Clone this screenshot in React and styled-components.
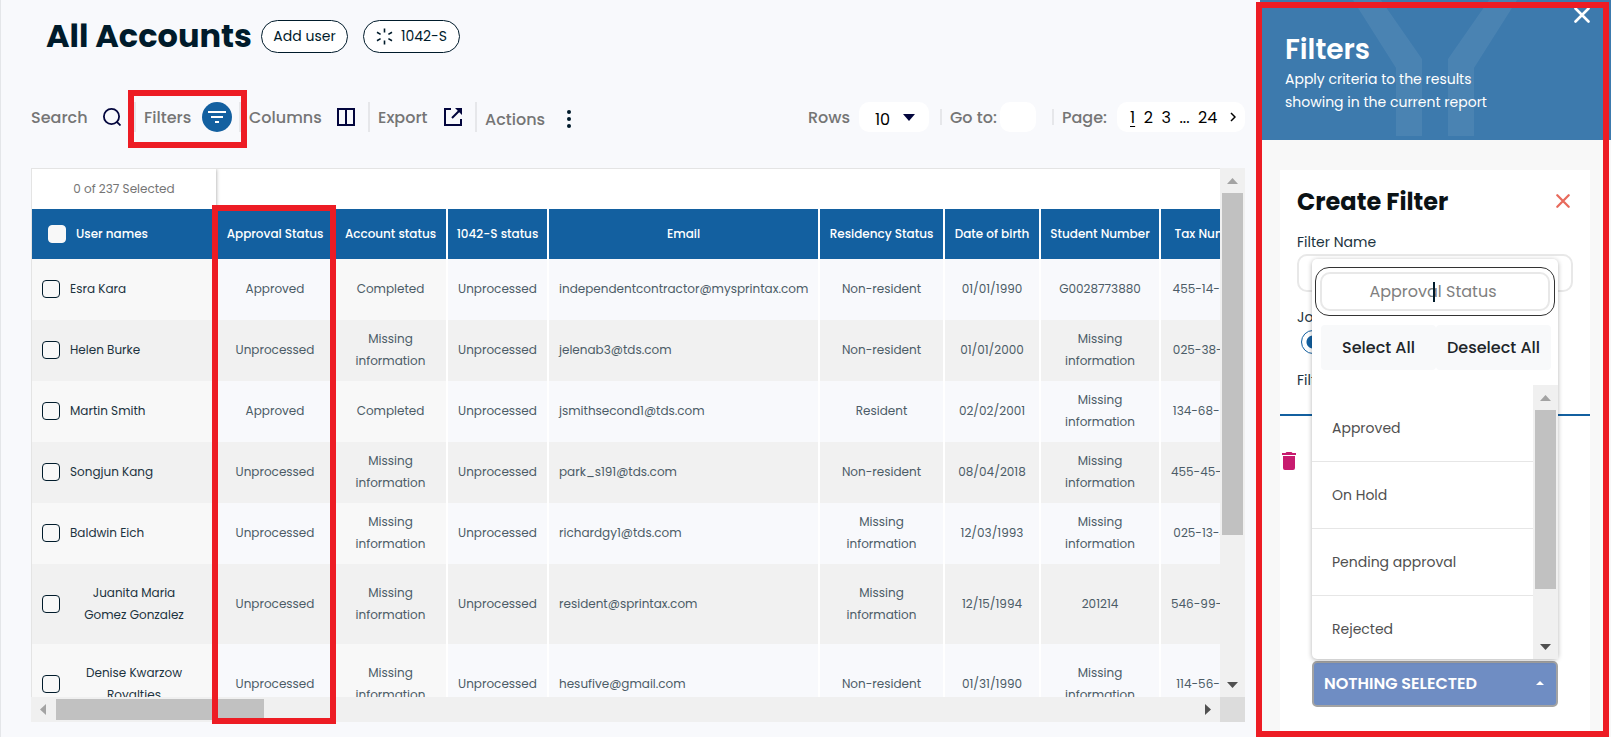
import React from 'react';
import styled, { createGlobalStyle, css } from 'styled-components';

const GlobalStyle = createGlobalStyle`
  *, *::before, *::after {
    box-sizing: border-box;
  }

  body {
    margin: 0;
    background: #f8f9fc;
    color: #001b2b;
    font-family: Poppins, Inter, "Open Sans", sans-serif;
    font-size: 16px;
  }

  button, input, select {
    font-family: inherit;
    color: inherit;
  }
`;

const Page = styled.div`
  display: flex;
  height: 100vh;
  overflow: hidden;
`;

const Main = styled.main`
  display: flex;
  flex: 1;
  flex-direction: column;
  min-width: 0;
  padding: 20px 15px 15px 30px;
  border-left: 1px solid #e4e6e9;
`;

/* red marker drawn over the part being explained */
const Marker = styled.div`
  position: absolute;
  z-index: 5;
  border: 6px solid #ed1c24;
  pointer-events: none;
`;

const TitleBar = styled.header`
  display: flex;
  align-items: center;
  height: 33px;
  padding-left: 15px;
`;

const Title = styled.h1`
  min-width: 215px;
  margin: 0;
  padding-bottom: 2px;
  font-size: 32px;
  font-weight: 700;
  line-height: 33px;
`;

const PillButton = styled.button`
  display: flex;
  align-items: center;
  justify-content: center;
  gap: 8px;
  width: ${props => props.$width};
  height: 33px;
  margin-right: 15px;
  padding: 0;
  border: 1px solid #001b2b;
  border-radius: 17px;
  background: #fff;
  font-size: 14px;
`;

const Toolbar = styled.div`
  display: flex;
  justify-content: space-between;
  height: 30px;
  margin-top: 49px;
`;

const Tools = styled.div`
  display: flex;
  align-items: center;
`;

const Tool = styled.button`
  position: relative;
  display: flex;
  align-items: center;
  justify-content: space-between;
  width: ${props => props.$width};
  height: 30px;
  padding: ${props => (props.$low ? '4px 0 0' : '0')};
  border: 0;
  background: transparent;
  color: #757575;
  font-size: 16px;
  font-weight: 500;
`;

const Separator = styled.span`
  width: 2px;
  height: ${props => (props.$short ? '16px' : '30px')};
  margin: 0 8px 0 ${props => props.$space || '13px'};
  background: #e6e7ea;
`;

const FilterBadge = styled.span`
  display: flex;
  align-items: center;
  justify-content: center;
  width: 30px;
  height: 30px;
  border-radius: 50%;
  background: #1360a0;
`;

const FilterMarker = styled(Marker)`
  top: -12px;
  right: -15px;
  width: 119px;
  height: 58px;
`;

const ToolLabel = styled.label`
  min-width: ${props => props.$width};
  color: #757575;
  font-size: 16px;
  font-weight: 500;
`;

const RowsSelect = styled.div`
  display: flex;
  position: relative;
  width: 70px;
  height: 30px;

  select {
    width: 100%;
    padding: 4px 0 0 16px;
    border: 0;
    border-radius: 10px;
    background: #fff;
    color: #000;
    font-size: 16px;
    appearance: none;
  }

  svg {
    position: absolute;
    top: 12px;
    right: 14px;
    pointer-events: none;
  }
`;

const GoToInput = styled.input`
  width: 36px;
  height: 30px;
  margin-right: 5px;
  padding: 0 8px;
  border: 0;
  border-radius: 10px;
  background: #fff;
`;

const Pages = styled.nav`
  display: flex;
  align-items: center;
  justify-content: space-between;
  width: 128px;
  height: 30px;
  padding: 0 9px 0 13px;
  border-radius: 10px;
  background: #fff;
  color: #000;

  a {
    color: inherit;
    text-decoration: none;
  }

  a[aria-current] {
    text-decoration: underline;
    text-underline-offset: 3px;
  }

  svg {
    display: block;
    margin-left: 4px;
  }
`;

const TableFrame = styled.section`
  position: relative;
  display: grid;
  flex: 1;
  grid-template-columns: minmax(0, 1fr) 25px;
  grid-template-rows: minmax(0, 1fr) 25px;
  min-height: 0;
  margin-top: 36px;
`;

const ColumnMarker = styled(Marker)`
  top: 37px;
  bottom: -2px;
  left: 181px;
  width: 124px;
`;

const Viewport = styled.div`
  overflow: hidden;
  border-top: 1px solid #e4e4e4;
  border-left: 1px solid #e4e4e4;
  background: #fff;
`;

const Selected = styled.div`
  width: 184px;
  height: 40px;
  background: #fff;
  box-shadow: 0 0 4px rgba(0, 0, 0, 0.4);
  color: #757575;
  font-size: 12px;
  line-height: 40px;
  text-align: center;
`;

const Table = styled.table`
  position: relative;
  width: 1231px;
  border-collapse: separate;
  border-spacing: 0;
  table-layout: fixed;
`;

const HeadCell = styled.th`
  width: ${props => props.$width};
  height: 50px;
  padding: 0;
  border-right: 2px solid #fff;
  background: #1360a0;
  color: #fff;
  font-size: 12px;
  font-weight: 500;
  white-space: nowrap;
`;

const Row = styled.tr`
  height: ${props => (props.$tall ? '80px' : '61px')};

  td {
    padding: 0 10px 1px;
    border-right: 2px solid #fff;
    background: #f8f9fc;
    color: #4c5c67;
    font-size: 12px;
    line-height: 22px;
    text-align: center;
  }

  td:nth-child(1),
  td:nth-child(3) {
    background: #f8f8f8;
  }

  td:nth-child(5) {
    text-align: left;
  }

  td:last-child {
    white-space: nowrap;
  }

  &:nth-child(even) td {
    background: #f1f1f1;
  }
`;

const UserLabel = styled.label`
  display: flex;
  align-items: center;
  gap: 10px;
  color: #1c3340;
  font-size: 12px;

  ${props => props.$head && css`
    padding-left: 16px;
    color: #fff;
  `}

  span {
    text-align: center;
  }

  ${props => props.$wrap && css`
    span {
      width: 128px;
      padding: 0 8px;
    }
  `}
`;

const Checkbox = styled.input`
  flex: none;
  width: 18px;
  height: 18px;
  margin: 0;
  border: 1px solid ${props => (props.$light ? '#f8f8f8' : '#001b2b')};
  border-radius: 4px;
  background: #f8f8f8;
  appearance: none;
`;

const ScrollBar = styled.div`
  display: flex;
  flex-direction: ${props => (props.$horizontal ? 'row' : 'column')};
  align-items: center;
  justify-content: space-between;
  background: #f0f0f0;
`;

const ScrollTrack = styled.div`
  display: flex;
  flex: 1;
  flex-direction: ${props => (props.$horizontal ? 'row' : 'column')};
`;

const ScrollThumb = styled.div`
  flex: 0 0 ${props => props.$size};
  min-width: 21px;
  min-height: 21px;
  background: #c1c1c1;
`;

const ScrollCorner = styled.div`
  background: #dcdcdc;
`;

const Panel = styled.aside`
  position: relative;
  display: flex;
  flex: 0 0 351px;
  flex-direction: column;
  background: #f8f8f8;
`;

const PanelMarker = styled(Marker)`
  top: 2px;
  right: 2px;
  bottom: 0;
  left: -4px;
`;

const PanelHeader = styled.header`
  position: relative;
  flex: none;
  height: 140px;
  padding: 34px 25px 0;
  background: #3d7aad;
  color: #fff;

  h2 {
    margin: 0;
    font-size: 28px;
    font-weight: 600;
    line-height: 32px;
  }

  p {
    max-width: 220px;
    margin: 2px 0 0;
    font-size: 14px;
    line-height: 23px;
  }
`;

const PanelPattern = styled.svg`
  position: absolute;
  top: 0;
  left: 92px;
`;

const IconButton = styled.button`
  display: flex;
  padding: 0;
  border: 0;
  background: transparent;
`;

const CloseButton = styled(IconButton)`
  position: absolute;
  top: 7px;
  right: 21px;
`;

const Card = styled.form`
  display: flex;
  flex: 1;
  flex-direction: column;
  margin: 30px 21px 5px 20px;
  background: #fff;
`;

const CardTitle = styled.div`
  display: flex;
  align-items: center;
  justify-content: space-between;
  height: 60px;
  padding: 2px 20px 0 17px;

  h3 {
    margin: 0;
    color: #0b1215;
    font-size: 24px;
    font-weight: 700;
  }
`;

const Fields = styled.div`
  display: flex;
  flex-direction: column;
  height: 186px;
  padding: 0 17px;
  border-bottom: 2px solid #1360a0;
`;

const FieldLabel = styled.label`
  height: 24px;
  color: #1c3340;
  font-size: 14px;
  line-height: 24px;
`;

const NameInput = styled.input`
  flex: none;
  width: 100%;
  height: 38px;
  margin-bottom: 13px;
  padding: 0 12px;
  border: 2px solid #e8e8e8;
  border-radius: 10px;
  background: #fff;
`;

const Radio = styled.input`
  flex: none;
  width: 24px;
  height: 24px;
  margin: 1px 4px 14px;
  border: 1px solid #1360a0;
  border-radius: 50%;
  background: radial-gradient(circle, #1360a0 6px, #fff 7px);
  appearance: none;
`;

const FilterRow = styled.div`
  display: flex;
  flex: 1;
  align-items: flex-end;
  justify-content: space-between;
  padding: 0 32px 25px 0;
`;

const TrashButton = styled(IconButton)`
  align-self: flex-start;
  padding: 36px 0 0 2px;
`;

const Dropdown = styled.div`
  position: relative;
  width: 246px;
`;

const DropdownButton = styled.button`
  display: flex;
  align-items: center;
  justify-content: space-between;
  width: 100%;
  height: 46px;
  padding: 0 12px 2px 10px;
  border: 2px solid #a3a3a3;
  border-radius: 5px;
  background: #6f8dc3;
  color: #fff;
  font-size: 16px;
  font-weight: 600;
`;

const Menu = styled.div`
  position: absolute;
  right: 0;
  bottom: 48px;
  left: 0;
  display: flex;
  flex-direction: column;
  padding-top: 8px;
  border-radius: 5px;
  background: #fff;
  box-shadow: 0 1px 5px rgba(0, 0, 0, 0.3);
`;

const MenuSearch = styled.div`
  position: relative;
  display: flex;
  margin: 0 3px;
  padding: 4px;
  border: 1px solid #333;
  border-radius: 14px;

  input {
    width: 100%;
    height: 39px;
    padding: 0 4px 0 0;
    border: 2px solid #e8e8e8;
    border-radius: 10px;
    background: #fff;
    font-size: 16px;
    text-align: center;
    outline: 0;
  }

  input::placeholder {
    color: #808080;
    opacity: 1;
  }
`;

const Caret = styled.span`
  position: absolute;
  top: 14px;
  left: calc(50% - 2px);
  width: 2px;
  height: 20px;
  background: #001b2b;
`;

const MenuActions = styled.div`
  display: flex;
  margin: 9px 7px 15px 9px;

  button {
    flex: 1;
    height: 45px;
    padding: 0;
    border: 0;
    border-radius: 4px;
    background: #f8f9fa;
    color: #212529;
    font-size: 16px;
    font-weight: 500;
  }
`;

const MenuBody = styled.div`
  display: grid;
  grid-template-columns: 1fr 25px;
`;

const Options = styled.ul`
  margin: 0;
  padding: 10px 0 0;
  list-style: none;
`;

const Option = styled.li`
  height: 67px;
  padding-left: 20px;
  border-bottom: 1px solid #e6e6e6;
  color: #505050;
  font-size: 14px;
  line-height: 66px;

  &:last-child {
    height: 63px;
    border-bottom: 0;
  }
`;

const columns = [
  { label: 'User names', width: '185px' },
  { label: 'Approval Status', width: '118px' },
  { label: 'Account status', width: '113px' },
  { label: '1042-S status', width: '101px' },
  { label: 'Email', width: '271px' },
  { label: 'Residency Status', width: '125px' },
  { label: 'Date of birth', width: '96px' },
  { label: 'Student Number', width: '120px' },
  { label: 'Tax Number', width: '102px' },
];

const MISSING = 'Missing information';

const users = [
  ['Esra Kara', 'Approved', 'Completed', 'Unprocessed', 'independentcontractor@mysprintax.com', 'Non-resident', '01/01/1990', 'G0028773880', '455-14-2804'],
  ['Helen Burke', 'Unprocessed', MISSING, 'Unprocessed', 'jelenab3@tds.com', 'Non-resident', '01/01/2000', MISSING, '025-38-4410'],
  ['Martin Smith', 'Approved', 'Completed', 'Unprocessed', 'jsmithsecond1@tds.com', 'Resident', '02/02/2001', MISSING, '134-68-9002'],
  ['Songjun Kang', 'Unprocessed', MISSING, 'Unprocessed', 'park_s191@tds.com', 'Non-resident', '08/04/2018', MISSING, '455-45-6620'],
  ['Baldwin Eich', 'Unprocessed', MISSING, 'Unprocessed', 'richardgy1@tds.com', MISSING, '12/03/1993', MISSING, '025-13-4074'],
  ['Juanita Maria Gomez Gonzalez', 'Unprocessed', MISSING, 'Unprocessed', 'resident@sprintax.com', MISSING, '12/15/1994', '201214', '546-99-8834'],
  ['Denise Kwarzow Royalties', 'Unprocessed', MISSING, 'Unprocessed', 'hesufive@gmail.com', 'Non-resident', '01/31/1990', MISSING, '114-56-8120'],
];

// names longer than this take two lines
const MAX_NAME = 20;

const options = ['Approved', 'On Hold', 'Pending approval', 'Rejected'];

const arrowPaths = {
  up: 'M7 16 12.5 10 18 16z',
  down: 'M7 10H18L12.5 16z',
  left: 'M15 7V18L9 12.5z',
  right: 'M10 7V18L16 12.5z',
};

const Arrow = ({ dir, active }) => (
  <svg width="25" height="25" viewBox="0 0 25 25">
    <path d={arrowPaths[dir]} fill={active ? '#505050' : '#a3a3a3'} />
  </svg>
);

const Cross = ({ size, color }) => (
  <svg width={size} height={size} viewBox="0 0 16 16" fill="none" stroke={color} strokeWidth="2.6" strokeLinecap="round">
    <path d="M1.5 1.5 14.5 14.5M14.5 1.5 1.5 14.5" />
  </svg>
);

const SpinnerIcon = () => (
  <svg width="17" height="17" viewBox="0 0 17 17" fill="none" stroke="#001b2b" strokeWidth="1.6">
    <path d="M8.5 0.5V4.5M8.5 12.5V16.5M1 4.3 4.6 6.4M12.4 6.4 16 4.3M1 12.7 4.6 10.6M12.4 10.6 16 12.7" />
  </svg>
);

const SearchIcon = () => (
  <svg width="18" height="18" viewBox="0 0 18 18" fill="none" stroke="#03063d" strokeWidth="1.8">
    <circle cx="8.5" cy="8.5" r="7.6" />
    <path d="M13.6 13.6 17.5 17.5" />
  </svg>
);

const FilterIcon = () => (
  <svg width="18" height="12" viewBox="0 0 18 12" fill="#fff">
    <path d="M0 0H18V2H0zM3 5H15V7H3zM7 10H11V12H7z" />
  </svg>
);

const ColumnsIcon = () => (
  <svg width="18" height="18" viewBox="0 0 18 18" fill="none" stroke="#03063d" strokeWidth="2">
    <path d="M1 1H17V17H1zM9 1V17" />
  </svg>
);

const ExportIcon = () => (
  <svg width="18" height="18" viewBox="0 0 18 18" fill="none" stroke="#03063d" strokeWidth="2">
    <path d="M7 1H1V17H17V11M8 10 15 3" />
    <path d="M11 0H18V7z" fill="#03063d" stroke="none" />
  </svg>
);

const DotsIcon = () => (
  <svg width="4" height="18" viewBox="0 0 4 18" fill="#001b2b">
    <circle cx="2" cy="2" r="2" />
    <circle cx="2" cy="9" r="2" />
    <circle cx="2" cy="16" r="2" />
  </svg>
);

const TrashIcon = () => (
  <svg width="14" height="18" viewBox="0 0 14 18" fill="#c81b6f">
    <path d="M4.5 0H9.5L10.5 1H14V3H0V1H3.5zM1 4H13V16Q13 18 11 18H3Q1 18 1 16z" />
  </svg>
);

const AccountsTable = () => (
  <TableFrame>
    <Viewport>
      <Selected>0 of 237 Selected</Selected>
      <Table>
        <thead>
          <tr>
            {columns.map((column, i) => (
              <HeadCell key={column.label} $width={column.width}>
                {i === 0 ? (
                  <UserLabel $head>
                    <Checkbox type="checkbox" $light />
                    <span>{column.label}</span>
                  </UserLabel>
                ) : column.label}
              </HeadCell>
            ))}
          </tr>
        </thead>
        <tbody>
          {users.map(([name, ...cells]) => (
            <Row key={name} $tall={name.length > MAX_NAME}>
              <td>
                <UserLabel $wrap={name.length > MAX_NAME}>
                  <Checkbox type="checkbox" />
                  <span>{name}</span>
                </UserLabel>
              </td>
              {cells.map((cell, i) => <td key={columns[i + 1].label}>{cell}</td>)}
            </Row>
          ))}
        </tbody>
      </Table>
    </Viewport>
    <ScrollBar>
      <Arrow dir="up" />
      <ScrollTrack><ScrollThumb $size="342px" /></ScrollTrack>
      <Arrow dir="down" active />
    </ScrollBar>
    <ScrollBar $horizontal>
      <Arrow dir="left" />
      <ScrollTrack $horizontal><ScrollThumb $size="208px" /></ScrollTrack>
      <Arrow dir="right" active />
    </ScrollBar>
    <ScrollCorner />
    <ColumnMarker />
  </TableFrame>
);

const FiltersPanel = () => (
  <Panel>
    <PanelHeader>
      <PanelPattern width="166" height="136" viewBox="0 0 166 136" fill="#fff" fillOpacity="0.07">
        <path d="M1 0H29L70 59V136H44V68zM165 0H137L96 59V136H122V68z" />
      </PanelPattern>
      <h2>Filters</h2>
      <p>Apply criteria to the results showing in the current report</p>
      <CloseButton aria-label="Close filters"><Cross size={16} color="#fff" /></CloseButton>
    </PanelHeader>
    <Card>
      <CardTitle>
        <h3>Create Filter</h3>
        <IconButton type="button" aria-label="Cancel"><Cross size={14} color="#e86a5c" /></IconButton>
      </CardTitle>
      <Fields>
        <FieldLabel htmlFor="filter-name">Filter Name</FieldLabel>
        <NameInput id="filter-name" />
        <FieldLabel htmlFor="join">Join</FieldLabel>
        <Radio id="join" type="radio" defaultChecked />
        <FieldLabel as="span">Filters</FieldLabel>
      </Fields>
      <FilterRow>
        <TrashButton type="button" aria-label="Delete filter"><TrashIcon /></TrashButton>
        <Dropdown>
          <DropdownButton type="button">
            NOTHING SELECTED
            <svg width="8" height="4" viewBox="0 0 8 4" fill="#fff"><path d="M0 4 4 0 8 4z" /></svg>
          </DropdownButton>
          <Menu>
            <MenuSearch>
              <input aria-label="Approval Status" placeholder="Approval Status" />
              <Caret />
            </MenuSearch>
            <MenuActions>
              <button type="button">Select All</button>
              <button type="button">Deselect All</button>
            </MenuActions>
            <MenuBody>
              <Options>
                {options.map(option => <Option key={option}>{option}</Option>)}
              </Options>
              <ScrollBar>
                <Arrow dir="up" />
                <ScrollTrack><ScrollThumb $size="80%" /></ScrollTrack>
                <Arrow dir="down" active />
              </ScrollBar>
            </MenuBody>
          </Menu>
        </Dropdown>
      </FilterRow>
    </Card>
    <PanelMarker />
  </Panel>
);

const App = () => (
  <>
    <GlobalStyle />
    <Page>
      <Main>
        <TitleBar>
          <Title>All Accounts</Title>
          <PillButton $width="87px">Add user</PillButton>
          <PillButton $width="97px"><SpinnerIcon />1042-S</PillButton>
        </TitleBar>
        <Toolbar>
          <Tools>
            <Tool $width="90px">Search<SearchIcon /></Tool>
            <Separator />
            <Tool $width="88px">
              Filters
              <FilterBadge><FilterIcon /></FilterBadge>
              <FilterMarker />
            </Tool>
            <Separator $space="7px" />
            <Tool $width="106px">Columns<ColumnsIcon /></Tool>
            <Separator />
            <Tool $width="84px">Export<ExportIcon /></Tool>
            <Separator />
            <Tool $width="86px" $low>Actions<DotsIcon /></Tool>
          </Tools>
          <Tools>
            <ToolLabel $width="51px" htmlFor="rows">Rows</ToolLabel>
            <RowsSelect>
              <select id="rows" defaultValue="10">
                <option>10</option>
                <option>25</option>
              </select>
              <svg width="12" height="7" viewBox="0 0 12 7" fill="#03063d"><path d="M0 0H12L6 7z" /></svg>
            </RowsSelect>
            <Separator $short $space="11px" />
            <ToolLabel $width="50px" htmlFor="go-to">Go to:</ToolLabel>
            <GoToInput id="go-to" />
            <Separator $short $space="11px" />
            <ToolLabel as="span" $width="55px">Page:</ToolLabel>
            <Pages>
              <a href="#1" aria-current="page">1</a>
              <a href="#2">2</a>
              <a href="#3">3</a>
              <span>...</span>
              <a href="#24">24</a>
              <a href="#next" aria-label="Next page">
                <svg width="6" height="10" viewBox="0 0 6 10" fill="none" stroke="#000" strokeWidth="1.5"><path d="M1 1 5 5 1 9" /></svg>
              </a>
            </Pages>
          </Tools>
        </Toolbar>
        <AccountsTable />
      </Main>
      <FiltersPanel />
    </Page>
  </>
);

export default App;
